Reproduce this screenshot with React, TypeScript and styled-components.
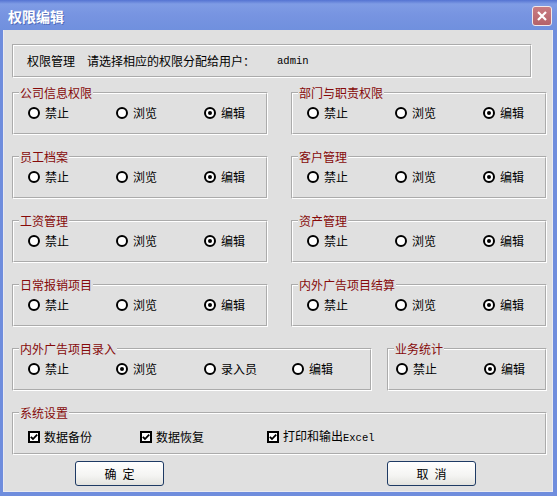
import React from "react";
import styled, { createGlobalStyle } from "styled-components";

const GlobalStyle = createGlobalStyle`
  html, body {
    margin: 0;
    padding: 0;
    background: #ffffff;
  }
  body {
    font-family: "Noto Sans CJK SC", "Liberation Sans", sans-serif;
    font-size: 12px;
    color: #000;
  }
`;

const Window = styled.div`
  width: 557px;
  height: 496px;
  display: flex;
  flex-direction: column;
  background: #6f8ddd;
  box-sizing: border-box;
`;

const TitleBar = styled.div`
  height: 30px;
  flex: none;
  display: flex;
  align-items: center;
  justify-content: space-between;
  padding: 1px 5px 0 8px;
  box-sizing: border-box;
  background: linear-gradient(
    to bottom,
    #5473d2 0px,
    #7f9ce5 4px,
    #7794e1 50%,
    #7090de 100%
  );
`;

const TitleText = styled.span`
  color: #fff;
  font-size: 14px;
  font-weight: bold;
  text-shadow: 1px 1px 0 rgba(40, 60, 140, 0.45);
`;

const CloseButton = styled.div`
  width: 20px;
  height: 20px;
  box-sizing: border-box;
  border: 1px solid #f2e8ea;
  border-radius: 3px;
  background: linear-gradient(to bottom, #c97c82, #b4626a);
  display: flex;
  align-items: center;
  justify-content: center;
`;

const Body = styled.div`
  flex: 1;
  margin: 0 4px 4px 3px;
  background: #e0e0e0;
  border: 1px solid #eaeaf0;
  border-top: none;
  display: flex;
  flex-direction: column;
  padding: 14px 5px 4px 8px;
  box-sizing: border-box;
`;

const Header = styled.div`
  width: 520px;
  height: 34px;
  box-sizing: border-box;
  border: 2px groove #fff;
  display: flex;
  align-items: center;
  padding-left: 13px;
  margin-bottom: 8px;
`;

const HeaderLabel = styled.span<{ gap: number }>`
  margin-right: ${({ gap }) => gap}px;
  line-height: 14px;
`;

const Mono = styled.span`
  font-family: "Liberation Mono", "DejaVu Sans Mono", monospace;
  font-size: 10.5px;
`;

const Grid = styled.div`
  display: grid;
  grid-template-columns: 256px 256px;
  column-gap: 23px;
  row-gap: 15px;
`;

const SplitRow = styled.div`
  display: flex;
  gap: 15px;
  margin-top: 15px;
`;

const Group = styled.fieldset<{ w?: number }>`
  margin: 0;
  padding: 0;
  min-width: 0;
  width: ${({ w }) => (w ? `${w}px` : "auto")};
  box-sizing: border-box;
  border: 2px groove #fff;
`;

const Legend = styled.legend`
  margin-left: 5px;
  padding: 0 1px;
  color: #860a0a;
  line-height: 14px;
  font-size: 12px;
`;

const OptionRow = styled.div<{ pl: number }>`
  display: flex;
  align-items: center;
  padding: 6px 0 13px ${({ pl }) => pl}px;
  height: 14px;
`;

const Option = styled.label<{ w: number }>`
  width: ${({ w }) => w}px;
  flex: none;
  display: flex;
  align-items: center;
  gap: 5px;
  line-height: 14px;
`;

const RadioDot = styled.span<{ on: boolean }>`
  width: 12px;
  height: 12px;
  box-sizing: border-box;
  border: 2px solid #000;
  border-radius: 50%;
  background: #fff;
  display: flex;
  align-items: center;
  justify-content: center;
  &::after {
    content: "";
    width: 4px;
    height: 4px;
    border-radius: 50%;
    background: ${({ on }) => (on ? "#000" : "transparent")};
  }
`;

const CheckRow = styled.div`
  display: flex;
  align-items: center;
  padding: 10px 0 9px 14px;
  height: 14px;
`;

const CheckItem = styled.label<{ w?: number }>`
  width: ${({ w }) => (w ? `${w}px` : "auto")};
  flex: none;
  display: flex;
  align-items: center;
  gap: 4px;
  line-height: 14px;
`;

const CheckBox = styled.span`
  width: 12px;
  height: 12px;
  box-sizing: border-box;
  border: 2px solid #000;
  background: #fff;
  display: flex;
  align-items: center;
  justify-content: center;
`;

const System = styled(Group)`
  margin-top: 15px;
`;

const ButtonRow = styled.div`
  display: flex;
  margin-top: 6px;
  padding-left: 63px;
  gap: 223px;
`;

const Button = styled.div`
  width: 89px;
  height: 25px;
  box-sizing: border-box;
  border: 1px solid #1e3a64;
  border-radius: 3px;
  background: linear-gradient(to bottom, #ffffff 0%, #f4f4f2 60%, #e2e2de 100%);
  display: flex;
  align-items: center;
  justify-content: center;
  font-size: 12px;
  letter-spacing: 6px;
  text-indent: 6px;
`;

type Opt = { label: string; on?: boolean };

const stdOpts: Opt[] = [
  { label: "禁止" },
  { label: "浏览" },
  { label: "编辑", on: true },
];

const RadioGroup = ({
  title,
  options,
  pl = 14,
  w,
}: {
  title: string;
  options: Opt[];
  pl?: number;
  w?: number;
}) => (
  <Group w={w}>
    <Legend>{title}</Legend>
    <OptionRow pl={pl}>
      {options.map((o) => (
        <Option key={o.label} w={88}>
          <RadioDot on={!!o.on} />
          {o.label}
        </Option>
      ))}
    </OptionRow>
  </Group>
);

const Check = () => (
  <CheckBox>
    <svg width="8" height="8" viewBox="0 0 8 8">
      <path d="M0.8 3.8 L3 6 L7.2 1.6" stroke="#000" strokeWidth="1.8" fill="none" />
    </svg>
  </CheckBox>
);

export default function App() {
  return (
    <>
      <GlobalStyle />
      <Window>
        <TitleBar>
          <TitleText>权限编辑</TitleText>
          <CloseButton>
            <svg width="12" height="12" viewBox="0 0 12 12">
              <path d="M2 2 L10 10 M10 2 L2 10" stroke="#fff" strokeWidth="2.2" />
            </svg>
          </CloseButton>
        </TitleBar>
        <Body>
          <Header>
            <HeaderLabel gap={12}>权限管理</HeaderLabel>
            <HeaderLabel gap={22}>请选择相应的权限分配给用户：</HeaderLabel>
            <Mono>admin</Mono>
          </Header>
          <Grid>
            <RadioGroup title="公司信息权限" options={stdOpts} />
            <RadioGroup title="部门与职责权限" options={stdOpts} />
            <RadioGroup title="员工档案" options={stdOpts} />
            <RadioGroup title="客户管理" options={stdOpts} />
            <RadioGroup title="工资管理" options={stdOpts} />
            <RadioGroup title="资产管理" options={stdOpts} />
            <RadioGroup title="日常报销项目" options={stdOpts} />
            <RadioGroup title="内外广告项目结算" options={stdOpts} />
          </Grid>
          <SplitRow>
            <RadioGroup
              title="内外广告项目录入"
              w={360}
              options={[
                { label: "禁止" },
                { label: "浏览", on: true },
                { label: "录入员" },
                { label: "编辑" },
              ]}
            />
            <RadioGroup
              title="业务统计"
              w={160}
              pl={7}
              options={[{ label: "禁止" }, { label: "编辑", on: true }]}
            />
          </SplitRow>
          <System>
            <Legend>系统设置</Legend>
            <CheckRow>
              <CheckItem w={112}>
                <Check />
                数据备份
              </CheckItem>
              <CheckItem w={127}>
                <Check />
                数据恢复
              </CheckItem>
              <CheckItem>
                <Check />
                <span>
                  打印和输出<Mono>Excel</Mono>
                </span>
              </CheckItem>
            </CheckRow>
          </System>
          <ButtonRow>
            <Button>确定</Button>
            <Button>取消</Button>
          </ButtonRow>
        </Body>
      </Window>
    </>
  );
}
